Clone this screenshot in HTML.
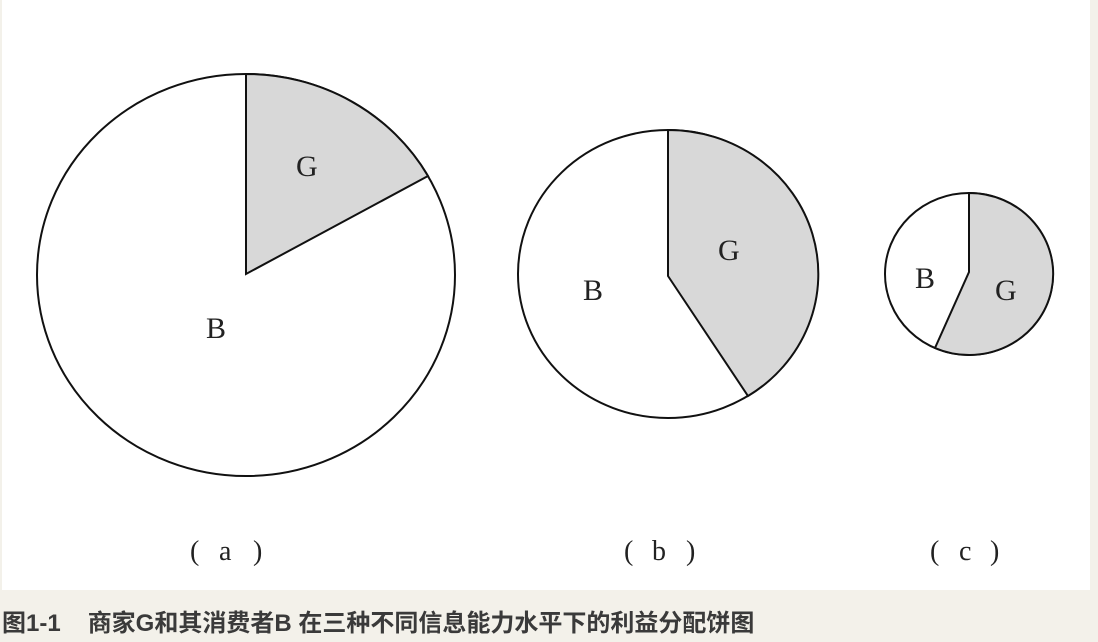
<!DOCTYPE html>
<html><head><meta charset="utf-8"><style>
html,body{margin:0;padding:0;}
body{width:1098px;height:642px;background:#f3f1ea;position:relative;overflow:hidden;}
.panel{position:absolute;left:2px;top:0;width:1088px;height:590px;background:#fff;}
.cap{position:absolute;left:2px;top:609px;font:bold 24px "Liberation Sans","Noto Sans CJK SC",sans-serif;color:#3a3a3a;white-space:pre;line-height:30px;}
.cap span{margin-left:27px;}
svg{position:absolute;left:0;top:0;}
text{font-family:"Liberation Serif","Noto Serif CJK SC",serif;fill:#222;}
</style></head><body>
<div class="panel"></div>
<svg width="1098" height="642" viewBox="0 0 1098 642">
<g stroke="#111" stroke-width="2" fill="none">
<ellipse cx="246" cy="275" rx="209" ry="201" fill="#fff"/>
<path d="M246 74 A209 201 0 0 1 428 176 L246 274 Z" fill="#d8d8d8"/>
<ellipse cx="668" cy="274" rx="150" ry="144" fill="#fff"/>
<path d="M668 130 A150 144 0 0 1 748 396 L668 276 Z" fill="#d8d8d8"/>
<ellipse cx="969" cy="274" rx="84" ry="81" fill="#fff"/>
<path d="M969 193 A84 81 0 1 1 935 348 L969 272 Z" fill="#d8d8d8"/>
</g>
<g font-size="30">
<text x="296" y="176">G</text>
<text x="206" y="338">B</text>
<text x="718" y="260">G</text>
<text x="583" y="300">B</text>
<text x="915" y="288">B</text>
<text x="995" y="300">G</text>
</g>
<g font-size="28">
<text x="190" y="560">(</text><text x="219" y="560">a</text><text x="253" y="560">)</text>
<text x="624" y="560">(</text><text x="652" y="560">b</text><text x="686" y="560">)</text>
<text x="930" y="560">(</text><text x="959" y="560">c</text><text x="990" y="560">)</text>
</g>
</svg>
<div class="cap">图1-1<span>商家G和其消费者B 在三种不同信息能力水平下的利益分配饼图</span></div>
</body></html>
